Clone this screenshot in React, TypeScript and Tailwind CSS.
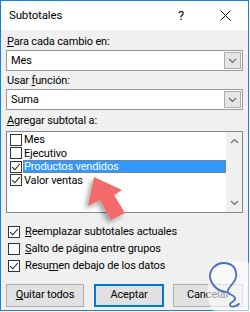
import React from 'react';

const font = { fontFamily: 'Roboto, "Noto Sans", sans-serif' };

const Check = ({ checked, size = 12 }: { checked?: boolean; size?: number }) => (
  <div
    className="flex-shrink-0 bg-white border border-[#333333] flex items-center justify-center"
    style={{ width: size, height: size }}
  >
    {checked && (
      <svg width={size - 2} height={size - 2} viewBox="0 0 10 10">
        <polyline points="1.2,5.2 3.8,7.8 8.8,2" fill="none" stroke="#222" strokeWidth="1.1" />
      </svg>
    )}
  </div>
);

const Chevron = ({ up }: { up?: boolean }) => (
  <svg width="9" height="6" viewBox="0 0 9 6">
    <polyline
      points={up ? '1,5 4.5,1.5 8,5' : '1,1 4.5,4.5 8,1'}
      fill="none"
      stroke="#6a6a6a"
      strokeWidth="1.2"
    />
  </svg>
);

const Combo = ({ value }: { value: string }) => (
  <div className="h-[21px] bg-white border border-[#9a9a9a] flex items-stretch">
    <div className="flex-1 pl-[4px] leading-[19px]">{value}</div>
    <div className="w-[17px] bg-[#e5e5e5] border border-[#adadad] m-[1px] flex items-center justify-center">
      <Chevron />
    </div>
  </div>
);

const items = [
  { label: 'Mes', checked: false },
  { label: 'Ejecutivo', checked: false },
  { label: 'Productos vendidos', checked: true, selected: true },
  { label: 'Valor ventas', checked: true },
];

const App: React.FC = () => {
  return (
    <div className="w-[250px] h-[312px] bg-white text-[11px] tracking-[-0.15px]" style={font}>
      <div className="relative w-[249px] h-[311px] border border-[#1a82d4] flex flex-col text-black">
        {/* Title bar */}
        <div className="h-[29px] bg-white flex items-center pl-[8px]">
          <span className="text-[11.5px] flex-1">Subtotales</span>
          <span className="text-[13px] mr-[36px]">?</span>
          <svg width="11" height="11" viewBox="0 0 11 11" className="mr-[17px]">
            <path d="M0.5 0.5 L10.5 10.5 M10.5 0.5 L0.5 10.5" stroke="#111" strokeWidth="1" />
          </svg>
        </div>

        {/* Body */}
        <div className="flex-1 bg-[#f0f0f0] px-[5px] flex flex-col">
          <div className="h-[14px] mt-[5px] leading-[14px] pl-[1px]">
            <span className="underline">P</span>ara cada cambio en:
          </div>
          <div className="mt-[1px]">
            <Combo value="Mes" />
          </div>
          <div className="h-[14px] mt-[3px] leading-[14px] pl-[1px]">
            Usar <span className="underline">f</span>unción:
          </div>
          <div className="mt-[1px]">
            <Combo value="Suma" />
          </div>
          <div className="h-[14px] mt-[4px] leading-[14px] pl-[1px]">
            <span className="underline">A</span>gregar subtotal a:
          </div>
          {/* List box */}
          <div className="mt-[3px] h-[82px] bg-white border border-[#828790] flex">
            <div className="flex-1 pt-[1px] pl-[3px]">
              {items.map((it) => (
                <div key={it.label} className="h-[13.5px] flex items-center">
                  <Check checked={it.checked} />
                  <div
                    className={
                      it.selected
                        ? 'ml-[1px] flex-1 h-[13px] bg-[#3399ff] text-white leading-[13px] pl-[1px] outline outline-1 outline-dotted outline-[#b07030] -outline-offset-1'
                        : 'ml-[1px] flex-1 h-[13px] leading-[13px] pl-[1px]'
                    }
                  >
                    {it.label}
                  </div>
                </div>
              ))}
            </div>
            <div className="w-[16px] bg-[#f0f0f0] flex flex-col items-center justify-between py-[6px]">
              <Chevron up />
              <Chevron />
            </div>
          </div>

          {/* Options */}
          <div className="mt-[13px] flex flex-col gap-[5px] pl-[2px]">
            <div className="h-[12px] flex items-center gap-[5px]">
              <Check checked />
              <span>
                <span className="underline">R</span>eemplazar subtotales actuales
              </span>
            </div>
            <div className="h-[12px] flex items-center gap-[5px]">
              <Check />
              <span>
                <span className="underline">S</span>alto de página entre grupos
              </span>
            </div>
            <div className="h-[12px] flex items-center gap-[5px]">
              <Check checked />
              <span>
                Resu<span className="underline">m</span>en debajo de los datos
              </span>
            </div>
          </div>

          {/* Buttons */}
          <div className="mt-[12px] flex">
            <button className="w-[78px] h-[23px] bg-[#e1e1e1] border border-[#adadad]">
              <span className="underline">Q</span>uitar todos
            </button>
            <button className="ml-[10px] w-[70px] h-[23px] bg-[#e1e1e1] border-2 border-[#0078d7]">
              Aceptar
            </button>
            <button className="ml-[9px] w-[70px] h-[23px] bg-[#e1e1e1] border border-[#adadad]">
              Cancelar
            </button>
          </div>
        </div>

        {/* Red arrow overlay */}
        <svg className="absolute left-0 top-0 pointer-events-none" width="249" height="311" viewBox="0 0 249 311">
          <defs>
            <filter id="sh" x="-50%" y="-50%" width="200%" height="200%">
              <feDropShadow dx="-3" dy="3" stdDeviation="2.5" floodColor="#000" floodOpacity="0.35" />
            </filter>
          </defs>
          <polygon
            points="93,176 121,189 113,194 124,212 110,219 99,199 87,205"
            fill="#f26b6b"
            filter="url(#sh)"
          />
          {/* watermark */}
          <circle cx="237" cy="291" r="31" fill="#ffffff" fillOpacity="0.6" />
          <path
            d="M225 291 C211 289 205 275 212 267 C219 259 233 261 235 271 C237 280 229 284 227 289 C225 294 233 293 234 297 C235 301 228 301 229 304 C230 307 236 305 238 303"
            fill="none"
            stroke="#4a70c0"
            strokeWidth="1.8"
            strokeLinecap="round"
          />
        </svg>
      </div>
    </div>
  );
};

export default App;
